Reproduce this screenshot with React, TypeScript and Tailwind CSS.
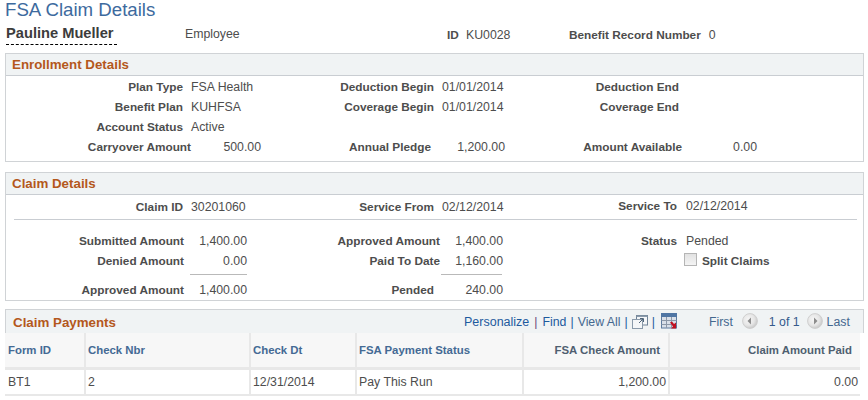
const L = "font-bold text-[11.8px] text-right shrink-0";
const V = "text-right shrink-0";

function SectionHead({ t }: { t: string }) {
  return <div className="h-[22px] bg-[#f0f3f4] border-b border-[#c9cdd2] pl-[6px] text-[13.33px] leading-[22px] font-bold text-[#b4581c]">{t}</div>;
}

function Circle({ dir }: { dir: "l" | "r" }) {
  return (
    <svg width="16" height="16" viewBox="0 0 16 16" className="shrink-0">
      <defs>
        <radialGradient id={"g" + dir} cx="0.4" cy="0.4" r="0.65">
          <stop offset="0" stopColor="#f6f6f6" />
          <stop offset="0.6" stopColor="#e6e6e6" />
          <stop offset="1" stopColor="#c4c4c4" />
        </radialGradient>
      </defs>
      <circle cx="8" cy="8" r="7.4" fill={"url(#g" + dir + ")"} stroke="#cfcfcf" />
      <path d={dir === "l" ? "M9 4.5 L5.5 8 L9 11.5 Z" : "M7 4.5 L10.5 8 L7 11.5 Z"} fill="#8c8c8c" />
    </svg>
  );
}

function NewWin() {
  return (
    <svg width="16" height="14" viewBox="0 0 16 14" className="shrink-0">
      <rect x="4.5" y="0.5" width="11" height="9.5" fill="#f4f6f8" stroke="#6f8296" />
      <rect x="4.5" y="0.5" width="11" height="1.5" fill="#8a9aaa" />
      <rect x="0.5" y="4.5" width="10" height="9" fill="#f4f6f8" stroke="#8a9aaa" />
      <path d="M7 8 L11 4 M8 3.5 H11.5 V7" fill="none" stroke="#4f6478" />
    </svg>
  );
}

function GridIcon() {
  return (
    <svg width="16" height="16" viewBox="0 0 16 16" className="shrink-0">
      <rect x="0.5" y="0.5" width="15" height="14.5" fill="#d9dfe8" stroke="#5d7a9e" />
      <rect x="0" y="0" width="16" height="4" fill="#4f75a3" />
      <path d="M5.5 4V15M10.5 4V15M0.5 7.5H15.5M0.5 11.5H15.5" stroke="#8c98a8" fill="none" />
      <path d="M9 9.5 L11 8.5 L13 11 L15 9.5 V15.5 H10 L12 13.5 Z" fill="#c01020" />
    </svg>
  );
}

export default function App() {
  return (
    <div className="w-[868px] h-[400px] overflow-hidden bg-white text-[12.3px] leading-[14px] text-[#4d4d4d] font-['Liberation_Sans',Arial,sans-serif]">
      <div className="h-[19px] pl-[5px] text-[18.67px] leading-[19px] text-[#3d6a9e]">FSA Claim Details</div>

      <div className="h-[34px] pl-[6px] flex">
        <span className="mt-[5px] h-[21px] w-[111px] shrink-0 font-bold text-[14.67px] leading-[19px] text-[#3c3c3c] border-b border-dashed border-black whitespace-nowrap">Pauline Mueller</span>
        <span className="ml-[68px] mt-[8px] w-[262px] shrink-0">Employee</span>
        <span className="mt-[9px] font-bold text-[11.8px] w-[16px] shrink-0">ID</span>
        <span className="mt-[9px] ml-[3px] w-[103px] shrink-0">KU0028</span>
        <span className="mt-[9px] font-bold text-[11.8px] shrink-0">Benefit Record Number</span>
        <span className="mt-[9px] ml-[8px]">0</span>
      </div>

      <div className="ml-[5px] w-[859px] h-[109px] border border-[#d0d3d6]">
        <SectionHead t="Enrollment Details" />
        <div className="pt-[1px]">
          <div className="h-5 flex items-center">
            <span className={L + " w-[177px]"}>Plan Type</span><span className="ml-2 w-[243px] shrink-0">FSA Health</span>
            <span className={L + " -ml-[100px] w-[100px]"}>Deduction Begin</span><span className="ml-2 w-[137px] shrink-0">01/01/2014</span>
            <span className={L + " w-[100px]"}>Deduction End</span>
          </div>
          <div className="h-5 flex items-center">
            <span className={L + " w-[177px]"}>Benefit Plan</span><span className="ml-2 w-[243px] shrink-0">KUHFSA</span>
            <span className={L + " -ml-[100px] w-[100px]"}>Coverage Begin</span><span className="ml-2 w-[137px] shrink-0">01/01/2014</span>
            <span className={L + " w-[100px]"}>Coverage End</span>
          </div>
          <div className="h-5 flex items-center">
            <span className={L + " w-[177px]"}>Account Status</span><span className="ml-2">Active</span>
          </div>
          <div className="h-5 flex items-center">
            <span className={L + " w-[185px]"}>Carryover Amount</span><span className={V + " w-[70px]"}>500.00</span>
            <span className={L + " w-[170px]"}>Annual Pledge</span><span className={V + " w-[74px]"}>1,200.00</span>
            <span className={L + " w-[177px]"}>Amount Available</span><span className={V + " w-[75px]"}>0.00</span>
          </div>
        </div>
      </div>

      <div className="ml-[5px] mt-[10px] w-[859px] h-[129px] border border-[#d0d3d6]">
        <SectionHead t="Claim Details" />
        <div className="h-[25px] ml-[8px] w-[843px] border-b border-[#c9cdd2] flex items-center">
          <span className={L + " w-[169px]"}>Claim ID</span><span className="ml-2 w-[123px] shrink-0">30201060</span>
          <span className={L + " -ml-[5px] w-[125px]"}>Service From</span><span className="ml-2 w-[135px] shrink-0">02/12/2014</span>
          <span className={L + " w-[100px] -mt-[2px]"}>Service To</span><span className="ml-[9px] -mt-[2px]">02/12/2014</span>
        </div>
        <div className="pt-[11px]">
          <div className="h-5 flex items-center">
            <span className={L + " w-[178px]"}>Submitted Amount</span><span className={V + " w-[63px]"}>1,400.00</span>
            <span className={L + " w-[193px]"}>Approved Amount</span><span className={V + " w-[63px]"}>1,400.00</span>
            <span className={L + " w-[174px]"}>Status</span><span className="ml-[9px]">Pended</span>
          </div>
          <div className="h-5 flex items-center">
            <span className={L + " w-[178px]"}>Denied Amount</span><span className={V + " w-[63px]"}>0.00</span>
            <span className={L + " w-[193px]"}>Paid To Date</span><span className={V + " w-[63px]"}>1,160.00</span>
            <span className="ml-[181px] -mt-[3px] w-[13px] h-[13px] shrink-0 border border-[#b5b5b5] bg-gradient-to-b from-[#e2e2e2] to-[#f4f4f4]" />
            <span className="ml-[5px] font-bold text-[11.8px]">Split Claims</span>
          </div>
          <div className="h-[9px] pt-[3px] flex items-start">
            <span className="ml-[184px] w-[57px] border-t border-[#b9b9b9]" />
            <span className="ml-[194px] w-[61px] border-t border-[#b9b9b9]" />
          </div>
          <div className="h-5 flex items-center">
            <span className={L + " w-[178px]"}>Approved Amount</span><span className={V + " w-[63px]"}>1,400.00</span>
            <span className={L + " w-[187px]"}>Pended</span><span className={V + " w-[69px]"}>240.00</span>
          </div>
        </div>
      </div>

      <div className="ml-[5px] mt-[8px] w-[859px] border-t border-[#d0d3d6]">
        <div className="h-[23px] bg-[#f0f3f4] flex items-center pl-[7px] border-r border-[#d0d3d6] border-l">
          <span className="w-[451px] shrink-0 mt-[2px] text-[13.33px] font-bold text-[#b4581c]">Claim Payments</span>
          <span className="text-[#1d5a9e] text-[12.5px] shrink-0">Personalize</span>
          <span className="mx-[5px] text-[#6c4a7a]">|</span>
          <span className="text-[#1d5a9e]">Find</span>
          <span className="mx-[4px] text-[#1d5a9e]">|</span>
          <span className="text-[#44688f]">View All</span>
          <span className="mx-[4px] text-[#1d5a9e]">|</span>
          <NewWin />
          <span className="mx-[4px] text-[#1d5a9e]">|</span>
          <span className="ml-[2px] -mt-[2px]"><GridIcon /></span>
          <span className="ml-[32px] text-[#44688f]">First</span>
          <span className="ml-[9px] -mt-[2px]"><Circle dir="l" /></span>
          <span className="ml-[11px] text-[#355a8c]">1 of 1</span>
          <span className="ml-[7px] -mt-[2px]"><Circle dir="r" /></span>
          <span className="ml-[4px] text-[#44688f]">Last</span>
        </div>
        <table className="w-[855px] table-fixed border-collapse text-[11.4px]">
          <thead>
            <tr className="h-[35px] bg-[#f7f7f7] font-bold text-[#446a94] border-b-[3px] border-[#e8e8e8]">
              <th className="w-[80px] pl-[3px] text-left border-r-2 border-[#e8e8e8]">Form ID</th>
              <th className="w-[165px] pl-[2px] text-left border-r-2 border-[#e8e8e8]">Check Nbr</th>
              <th className="w-[106px] pl-[2px] text-left border-r-2 border-[#e8e8e8]">Check Dt</th>
              <th className="w-[167px] pl-[2px] text-left border-r-2 border-[#e8e8e8]">FSA Payment Status</th>
              <th className="w-[146px] pr-[8px] text-right text-[#4f5f70] border-r-2 border-[#e8e8e8]">FSA Check Amount</th>
              <th className="pr-[8px] text-right text-[#4f5f70]">Claim Amount Paid</th>
            </tr>
          </thead>
          <tbody>
            <tr className="h-[27px] text-[12.3px] text-[#4d4d4d] border-b-2 border-[#e8e8e8]">
              <td className="pl-[3px] border-r-2 border-[#e8e8e8]">BT1</td>
              <td className="pl-[2px] border-r-2 border-[#e8e8e8]">2</td>
              <td className="pl-[2px] border-r-2 border-[#e8e8e8]">12/31/2014</td>
              <td className="pl-[2px] border-r-2 border-[#e8e8e8]">Pay This Run</td>
              <td className="pr-[2px] text-right border-r-2 border-[#e8e8e8]">1,200.00</td>
              <td className="pr-[2px] text-right">0.00</td>
            </tr>
          </tbody>
        </table>
      </div>
    </div>
  );
}
